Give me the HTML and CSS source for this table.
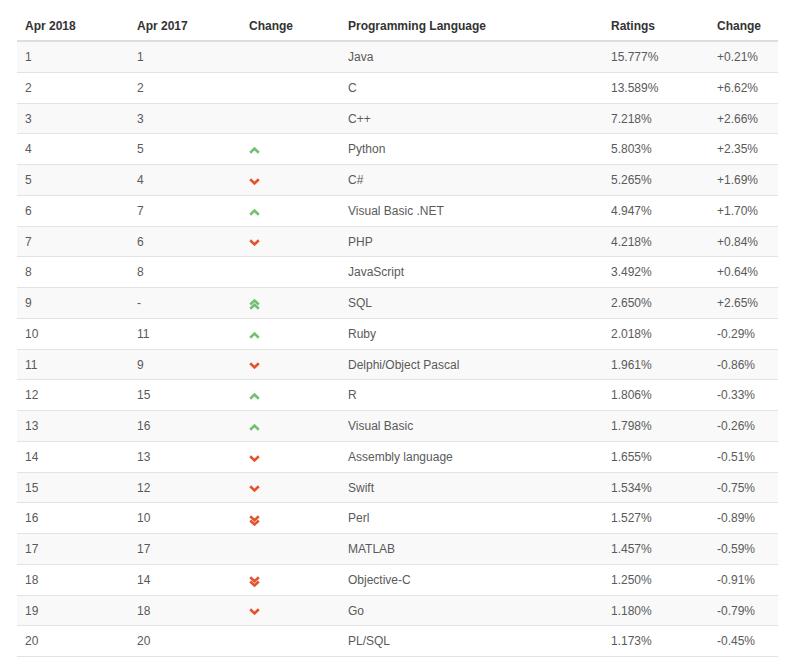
FILE: index.html
```html
<!DOCTYPE html>
<html>
<head>
<meta charset="utf-8">
<link rel="stylesheet" href="styles.css">
</head>
<body>
<div class="wrap">
<table class="tiobe">
<colgroup>
<col class="c1"><col class="c2"><col class="c3"><col class="c4"><col class="c5"><col class="c6">
</colgroup>
<thead>
<tr><th>Apr 2018</th><th>Apr 2017</th><th>Change</th><th>Programming Language</th><th>Ratings</th><th>Change</th></tr>
</thead>
<tbody>
<tr><td>1</td><td>1</td><td></td><td>Java</td><td>15.777%</td><td>+0.21%</td></tr>
<tr><td>2</td><td>2</td><td></td><td>C</td><td>13.589%</td><td>+6.62%</td></tr>
<tr><td>3</td><td>3</td><td></td><td>C++</td><td>7.218%</td><td>+2.66%</td></tr>
<tr><td>4</td><td>5</td><td><svg class="ic up" width="11" height="7" viewBox="0 0 11 7"><polyline points="1.2,5.8 5.5,1.6 9.8,5.8"/></svg></td><td>Python</td><td>5.803%</td><td>+2.35%</td></tr>
<tr><td>5</td><td>4</td><td><svg class="ic down" width="11" height="7" viewBox="0 0 11 7"><polyline points="1.2,1.2 5.5,5.4 9.8,1.2"/></svg></td><td>C#</td><td>5.265%</td><td>+1.69%</td></tr>
<tr><td>6</td><td>7</td><td><svg class="ic up" width="11" height="7" viewBox="0 0 11 7"><polyline points="1.2,5.8 5.5,1.6 9.8,5.8"/></svg></td><td>Visual Basic .NET</td><td>4.947%</td><td>+1.70%</td></tr>
<tr><td>7</td><td>6</td><td><svg class="ic down" width="11" height="7" viewBox="0 0 11 7"><polyline points="1.2,1.2 5.5,5.4 9.8,1.2"/></svg></td><td>PHP</td><td>4.218%</td><td>+0.84%</td></tr>
<tr><td>8</td><td>8</td><td></td><td>JavaScript</td><td>3.492%</td><td>+0.64%</td></tr>
<tr><td>9</td><td>-</td><td><svg class="ic up dbl" width="11" height="11" viewBox="0 0 11 11"><polyline points="1.2,5.5 5.5,1.5 9.8,5.5"/><polyline points="1.2,9.8 5.5,5.8 9.8,9.8"/></svg></td><td>SQL</td><td>2.650%</td><td>+2.65%</td></tr>
<tr><td>10</td><td>11</td><td><svg class="ic up" width="11" height="7" viewBox="0 0 11 7"><polyline points="1.2,5.8 5.5,1.6 9.8,5.8"/></svg></td><td>Ruby</td><td>2.018%</td><td>-0.29%</td></tr>
<tr><td>11</td><td>9</td><td><svg class="ic down" width="11" height="7" viewBox="0 0 11 7"><polyline points="1.2,1.2 5.5,5.4 9.8,1.2"/></svg></td><td>Delphi/Object Pascal</td><td>1.961%</td><td>-0.86%</td></tr>
<tr><td>12</td><td>15</td><td><svg class="ic up" width="11" height="7" viewBox="0 0 11 7"><polyline points="1.2,5.8 5.5,1.6 9.8,5.8"/></svg></td><td>R</td><td>1.806%</td><td>-0.33%</td></tr>
<tr><td>13</td><td>16</td><td><svg class="ic up" width="11" height="7" viewBox="0 0 11 7"><polyline points="1.2,5.8 5.5,1.6 9.8,5.8"/></svg></td><td>Visual Basic</td><td>1.798%</td><td>-0.26%</td></tr>
<tr><td>14</td><td>13</td><td><svg class="ic down" width="11" height="7" viewBox="0 0 11 7"><polyline points="1.2,1.2 5.5,5.4 9.8,1.2"/></svg></td><td>Assembly language</td><td>1.655%</td><td>-0.51%</td></tr>
<tr><td>15</td><td>12</td><td><svg class="ic down" width="11" height="7" viewBox="0 0 11 7"><polyline points="1.2,1.2 5.5,5.4 9.8,1.2"/></svg></td><td>Swift</td><td>1.534%</td><td>-0.75%</td></tr>
<tr><td>16</td><td>10</td><td><svg class="ic down dbl" width="11" height="11" viewBox="0 0 11 11"><polyline points="1.2,1.2 5.5,5.2 9.8,1.2"/><polyline points="1.2,5.5 5.5,9.5 9.8,5.5"/></svg></td><td>Perl</td><td>1.527%</td><td>-0.89%</td></tr>
<tr><td>17</td><td>17</td><td></td><td>MATLAB</td><td>1.457%</td><td>-0.59%</td></tr>
<tr><td>18</td><td>14</td><td><svg class="ic down dbl" width="11" height="11" viewBox="0 0 11 11"><polyline points="1.2,1.2 5.5,5.2 9.8,1.2"/><polyline points="1.2,5.5 5.5,9.5 9.8,5.5"/></svg></td><td>Objective-C</td><td>1.250%</td><td>-0.91%</td></tr>
<tr><td>19</td><td>18</td><td><svg class="ic down" width="11" height="7" viewBox="0 0 11 7"><polyline points="1.2,1.2 5.5,5.4 9.8,1.2"/></svg></td><td>Go</td><td>1.180%</td><td>-0.79%</td></tr>
<tr><td>20</td><td>20</td><td></td><td>PL/SQL</td><td>1.173%</td><td>-0.45%</td></tr>
</tbody>
</table>
</div>
</body>
</html>
```
FILE: styles.css
```css
html, body {
  margin: 0;
  padding: 0;
  background: #fff;
}
.wrap {
  padding: 10px 0 0 17px;
}
.tiobe {
  width: 761px;
  border-collapse: collapse;
  table-layout: fixed;
  font-family: "Liberation Sans", Arial, sans-serif;
  font-size: 12px;
  color: #5a5a5a;
}
.c1 { width: 112px; }
.c2 { width: 112px; }
.c3 { width: 99px; }
.c4 { width: 263px; }
.c5 { width: 106px; }
.c6 { width: 69px; }
.tiobe th {
  text-align: left;
  font-weight: bold;
  color: #333;
  padding: 8px 8px 6px;
  line-height: 16px;
  border-bottom: 2px solid #ddd;
}
.tiobe td {
  padding: 8px 8px 6px;
  line-height: 15.75px;
  border-top: 1px solid #e3e3e3;
  white-space: nowrap;
}
.tiobe tbody tr:nth-child(odd) td {
  background: #f9f9f9;
}
.tiobe tbody tr:last-child td {
  border-bottom: 1px solid #e3e3e3;
}
.ic {
  display: block;
  margin-left: 0;
  margin-top: 1px;
  fill: none;
  stroke-width: 2.6;
  stroke-linecap: butt;
  stroke-linejoin: miter;
}
.ic.up { stroke: #72c172; }
.ic.down { stroke: #e4532b; }
.ic.dbl { margin-top: -1px; margin-bottom: -3px; }
```
